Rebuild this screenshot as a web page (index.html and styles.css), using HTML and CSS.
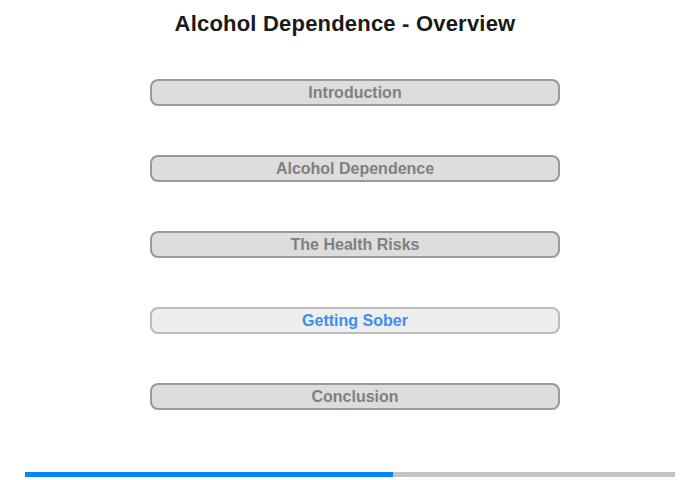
FILE: index.html
```html
<!DOCTYPE html>
<html>
<head>
<meta charset="utf-8">
<link rel="stylesheet" href="styles.css">
</head>
<body>
<div class="page">
  <h1 class="title">Alcohol Dependence - Overview</h1>
  <div class="menu">
    <div class="item">Introduction</div>
    <div class="item">Alcohol Dependence</div>
    <div class="item">The Health Risks</div>
    <div class="item active">Getting Sober</div>
    <div class="item">Conclusion</div>
  </div>
  <div class="progress"><div class="fill" style="width:56.6%"></div></div>
</div>
</body>
</html>
```
FILE: styles.css
```css
html, body {
  margin: 0;
  padding: 0;
  background: #fff;
}
.page {
  width: 700px;
  height: 480px;
  display: flex;
  flex-direction: column;
  font-family: "Liberation Sans", Arial, sans-serif;
}
.title {
  margin: 11px 0 0 0;
  width: 690px;
  text-align: center;
  font-size: 22px;
  line-height: 25px;
  letter-spacing: 0.2px;
  font-weight: bold;
  color: #1a1a1a;
}
.menu {
  display: flex;
  flex-direction: column;
  gap: 49px;
  margin-top: 43px;
  margin-left: 150px;
  width: 410px;
}
.item {
  box-sizing: border-box;
  height: 27px;
  border: 2px solid #999;
  border-radius: 8px;
  background: #ddd;
  color: #808080;
  font-size: 16px;
  font-weight: bold;
  line-height: 23px;
  text-align: center;
}
.item.active {
  background: #eee;
  border-color: #bbb;
  color: #3a8ef0;
}
.progress {
  margin-top: 62px;
  margin-left: 25px;
  width: 650px;
  height: 5px;
  background: #c3c3c3;
}
.fill {
  height: 100%;
  background: #0683f9;
}
```
